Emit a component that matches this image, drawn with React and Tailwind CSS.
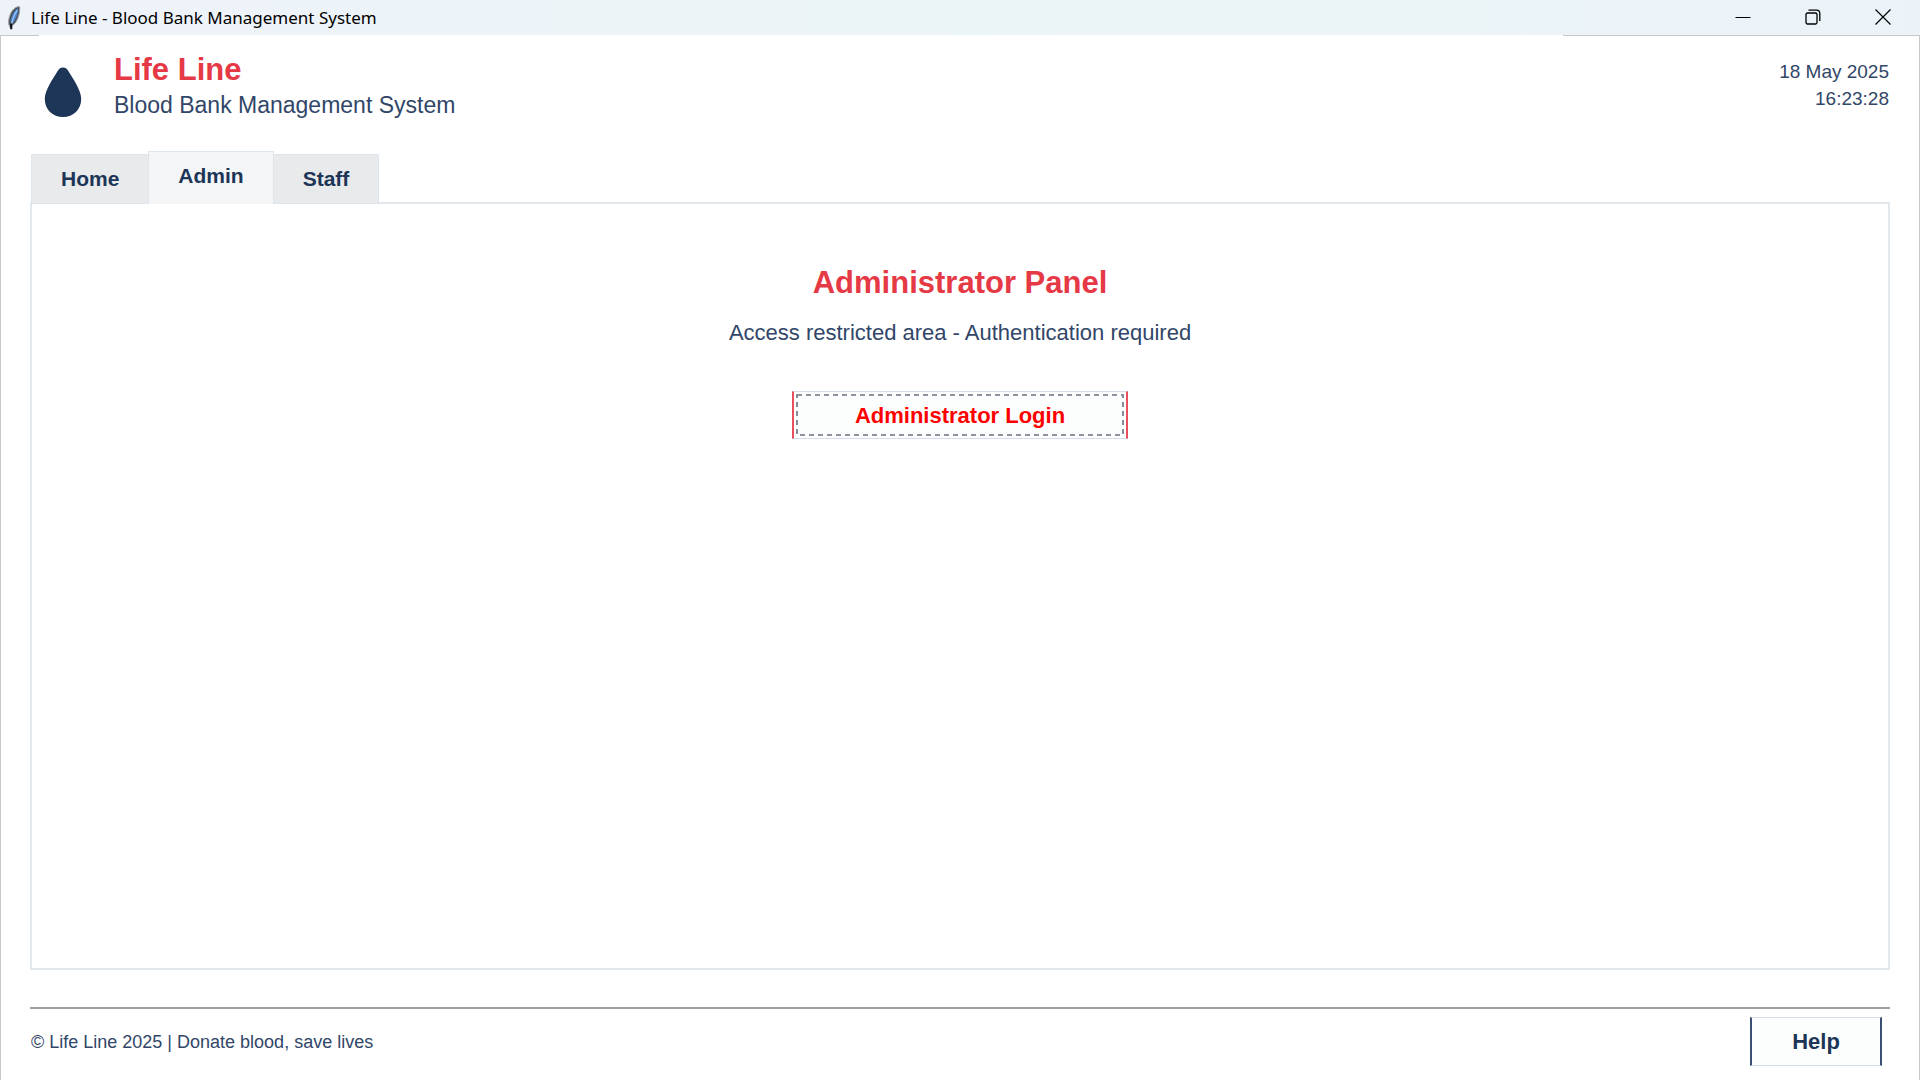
import { useState } from "react";

function FeatherIcon() {
  return (
    <svg width="16" height="26" viewBox="0 0 16 26" aria-hidden="true">
      <path d="M13.500 1.500C9.500 1.500 5.800 5 4 10C2.800 13.500 2 17 3 20L5.300 25L6 21C9.500 19 12 14 13 9.500C13.700 6.500 14 3.500 13.500 1.500Z" fill="#4b4f56" stroke="#a3a6aa" strokeWidth="1" />
      <path d="M12.200 3.500C9.500 4 6.800 8 5.400 12.500C4.600 15.500 4.500 17.500 5 19.500C8 17.500 10.400 13 11.500 9Z" fill="#4a86d4" />
      <path d="M11.500 5C8.500 9 7 13 5.500 19" stroke="#a9ccf4" strokeWidth="1.200" fill="none" />
      <path d="M5 18.500L5.300 24" stroke="#111" strokeWidth="2" />
    </svg>
  );
}

function WindowControls() {
  const button = "flex h-full w-[70px] items-center justify-center pb-[2px]";
  return (
    <div className="flex h-full pr-[2px]">
      <button className={button} aria-label="Minimize">
        <svg width="16" height="16" viewBox="0 0 16 16" stroke="#000" fill="none">
          <path d="M0.500 8.500H15.500" />
        </svg>
      </button>
      <button className={button} aria-label="Restore">
        <svg width="16" height="16" viewBox="0 0 16 16" stroke="#000" fill="none" strokeWidth="1.300">
          <rect x="1" y="4" width="11" height="11" rx="1.500" />
          <path d="M3.500 1.200H11.500Q14.800 1.200 14.800 4.500V12" />
        </svg>
      </button>
      <button className={button} aria-label="Close">
        <svg width="16" height="16" viewBox="0 0 16 16" stroke="#000" fill="none" strokeWidth="1.200">
          <path d="M0.500 0.500L15.500 15.500M15.500 0.500L0.500 15.500" />
        </svg>
      </button>
    </div>
  );
}

function TitleBar() {
  return (
    <header>
      <div className="flex h-[35px] items-center justify-between bg-linear-to-r from-[#eef3fa] via-[#ebf4f6] to-[#ebf3f8] pl-[6px]">
        <div className="flex items-center gap-[9px]">
          <FeatherIcon />
          <span className="font-['Noto_Sans','Open_Sans',sans-serif] text-[17px] leading-6 text-black">
            Life Line - Blood Bank Management System
          </span>
        </div>
        <WindowControls />
      </div>
      <div className="flex h-px justify-between">
        <div className="w-[39px] bg-[#c8c8c8]" />
        <div className="w-[357px] bg-[#c8c8c8]" />
      </div>
    </header>
  );
}

function Brand() {
  return (
    <div className="flex items-start gap-8">
      <svg className="mt-[15px]" width="38" height="51" viewBox="0 0 38 51" aria-hidden="true">
        <path d="M19 0.500C16.500 0.500 15.200 1.500 14 3.500C10 10.500 0.800 22.500 0.800 32C0.800 42.500 8.600 50 19 50C29.400 50 37.200 42.500 37.200 32C37.200 22.500 28 10.500 24 3.500C22.800 1.500 21.500 0.500 19 0.500Z" fill="#1d3557" />
      </svg>
      <div>
        <h1 className="text-[31px] font-bold leading-9 text-[#e63946]">Life Line</h1>
        <p className="text-[23px] leading-[34px] text-[#314668]">Blood Bank Management System</p>
      </div>
    </div>
  );
}

const tabs = ["Home", "Admin", "Staff"];

function TabBar({ active, onSelect }) {
  return (
    <div role="tablist" className="relative z-10 -mb-[2px] flex items-end pl-px">
      {tabs.map((name) => (
        <button
          key={name}
          role="tab"
          aria-selected={name === active}
          onClick={() => onSelect(name)}
          className={
            name === active
              ? "-mr-px -ml-px h-[53px] border border-b-0 border-[#dfe5ec] bg-[#f4f5f7] px-[29px] pb-[4px] text-[21px] font-bold"
              : "h-[50px] border border-[#dfe5ec] bg-[#e9eaec] px-[29px] text-[21px] font-bold"
          }
        >
          {name}
        </button>
      ))}
    </div>
  );
}

function FocusRing() {
  return (
    <svg className="absolute inset-[2px] h-[42px] w-[328px]" viewBox="0 0 328 42" fill="none" aria-hidden="true">
      <rect x="1" y="1" width="326" height="40" stroke="#6c7080" strokeWidth="1.600" strokeDasharray="5 4" />
    </svg>
  );
}

export default function App() {
  const [tab, setTab] = useState("Admin");
  return (
    <div className="flex min-h-screen flex-col bg-white font-['Liberation_Sans',Arial,sans-serif] text-[#1d3557]">
      <TitleBar />
      <div className="flex flex-1 flex-col border-x border-[#c8c8c8] px-[29px]">
        <div className="flex items-start justify-between pt-4 pl-[14px]">
          <Brand />
          <div className="pt-[6px] pr-px text-right text-[19px] leading-[27px] text-[#314668]">
            <p>18 May 2025</p>
            <p>16:23:28</p>
          </div>
        </div>
        <main className="mt-[29px] flex flex-1 flex-col">
          <TabBar active={tab} onSelect={setTab} />
          <section role="tabpanel" className="flex flex-1 flex-col items-center border-2 border-[#e3e8ed] pt-[59px]">
            <h2 className="text-[31px] font-bold leading-10 text-[#e63946]">Administrator Panel</h2>
            <p className="mt-4 text-[22px] leading-7 text-[#314668]">Access restricted area - Authentication required</p>
            <button className="relative mt-11 h-[48px] w-[336px] border-x-2 border-y border-x-[#e9505c] border-y-[#d5dbe8] bg-[#fcfefe] text-[22px] font-bold text-[#ff0000]">
              Administrator Login
              <FocusRing />
            </button>
          </section>
        </main>
        <footer className="mt-[37px] flex items-center justify-between border-t-2 border-[#a0a0a0] pt-2 pb-[14px]">
          <p className="pl-px text-[18px] leading-6 text-[#314668]">© Life Line 2025 | Donate blood, save lives</p>
          <button className="mr-2 h-[49px] w-[132px] border-x-2 border-y border-x-[#3b5070] border-y-[#d5dbe8] bg-[#fcfefe] text-[22px] font-bold">
            Help
          </button>
        </footer>
      </div>
    </div>
  );
}
